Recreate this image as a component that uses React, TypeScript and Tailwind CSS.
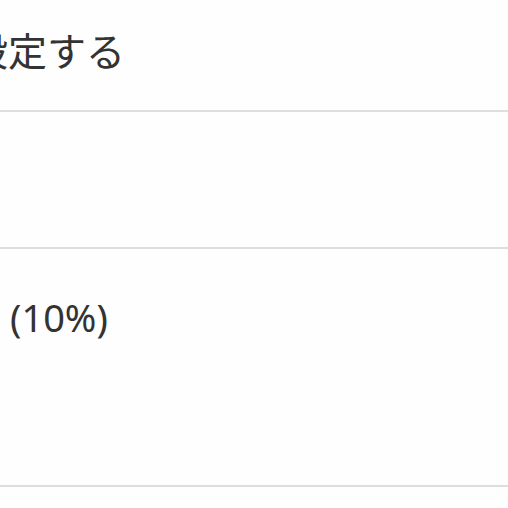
export default function App() {
  const font = { fontFamily: '"Noto Sans", "Noto Sans CJK JP", sans-serif' };
  return (
    <div className="h-[508px] w-[508px] overflow-hidden bg-[#fefefe] text-[#333333]" style={font}>
      <div className="flex h-[112px] items-start border-b-2 border-[#dedede] pt-[26px]">
        <span className="ml-[-31px] whitespace-nowrap text-[39px] leading-[50px]">設定する</span>
      </div>
      <div className="h-[137px] border-b-2 border-[#dedede]" />
      <div className="h-[238px] border-b-2 border-[#dedede] pt-[45px] pl-[10px]">
        <span className="whitespace-nowrap text-[38px] leading-[46px]">(10%)</span>
      </div>
    </div>
  );
}
